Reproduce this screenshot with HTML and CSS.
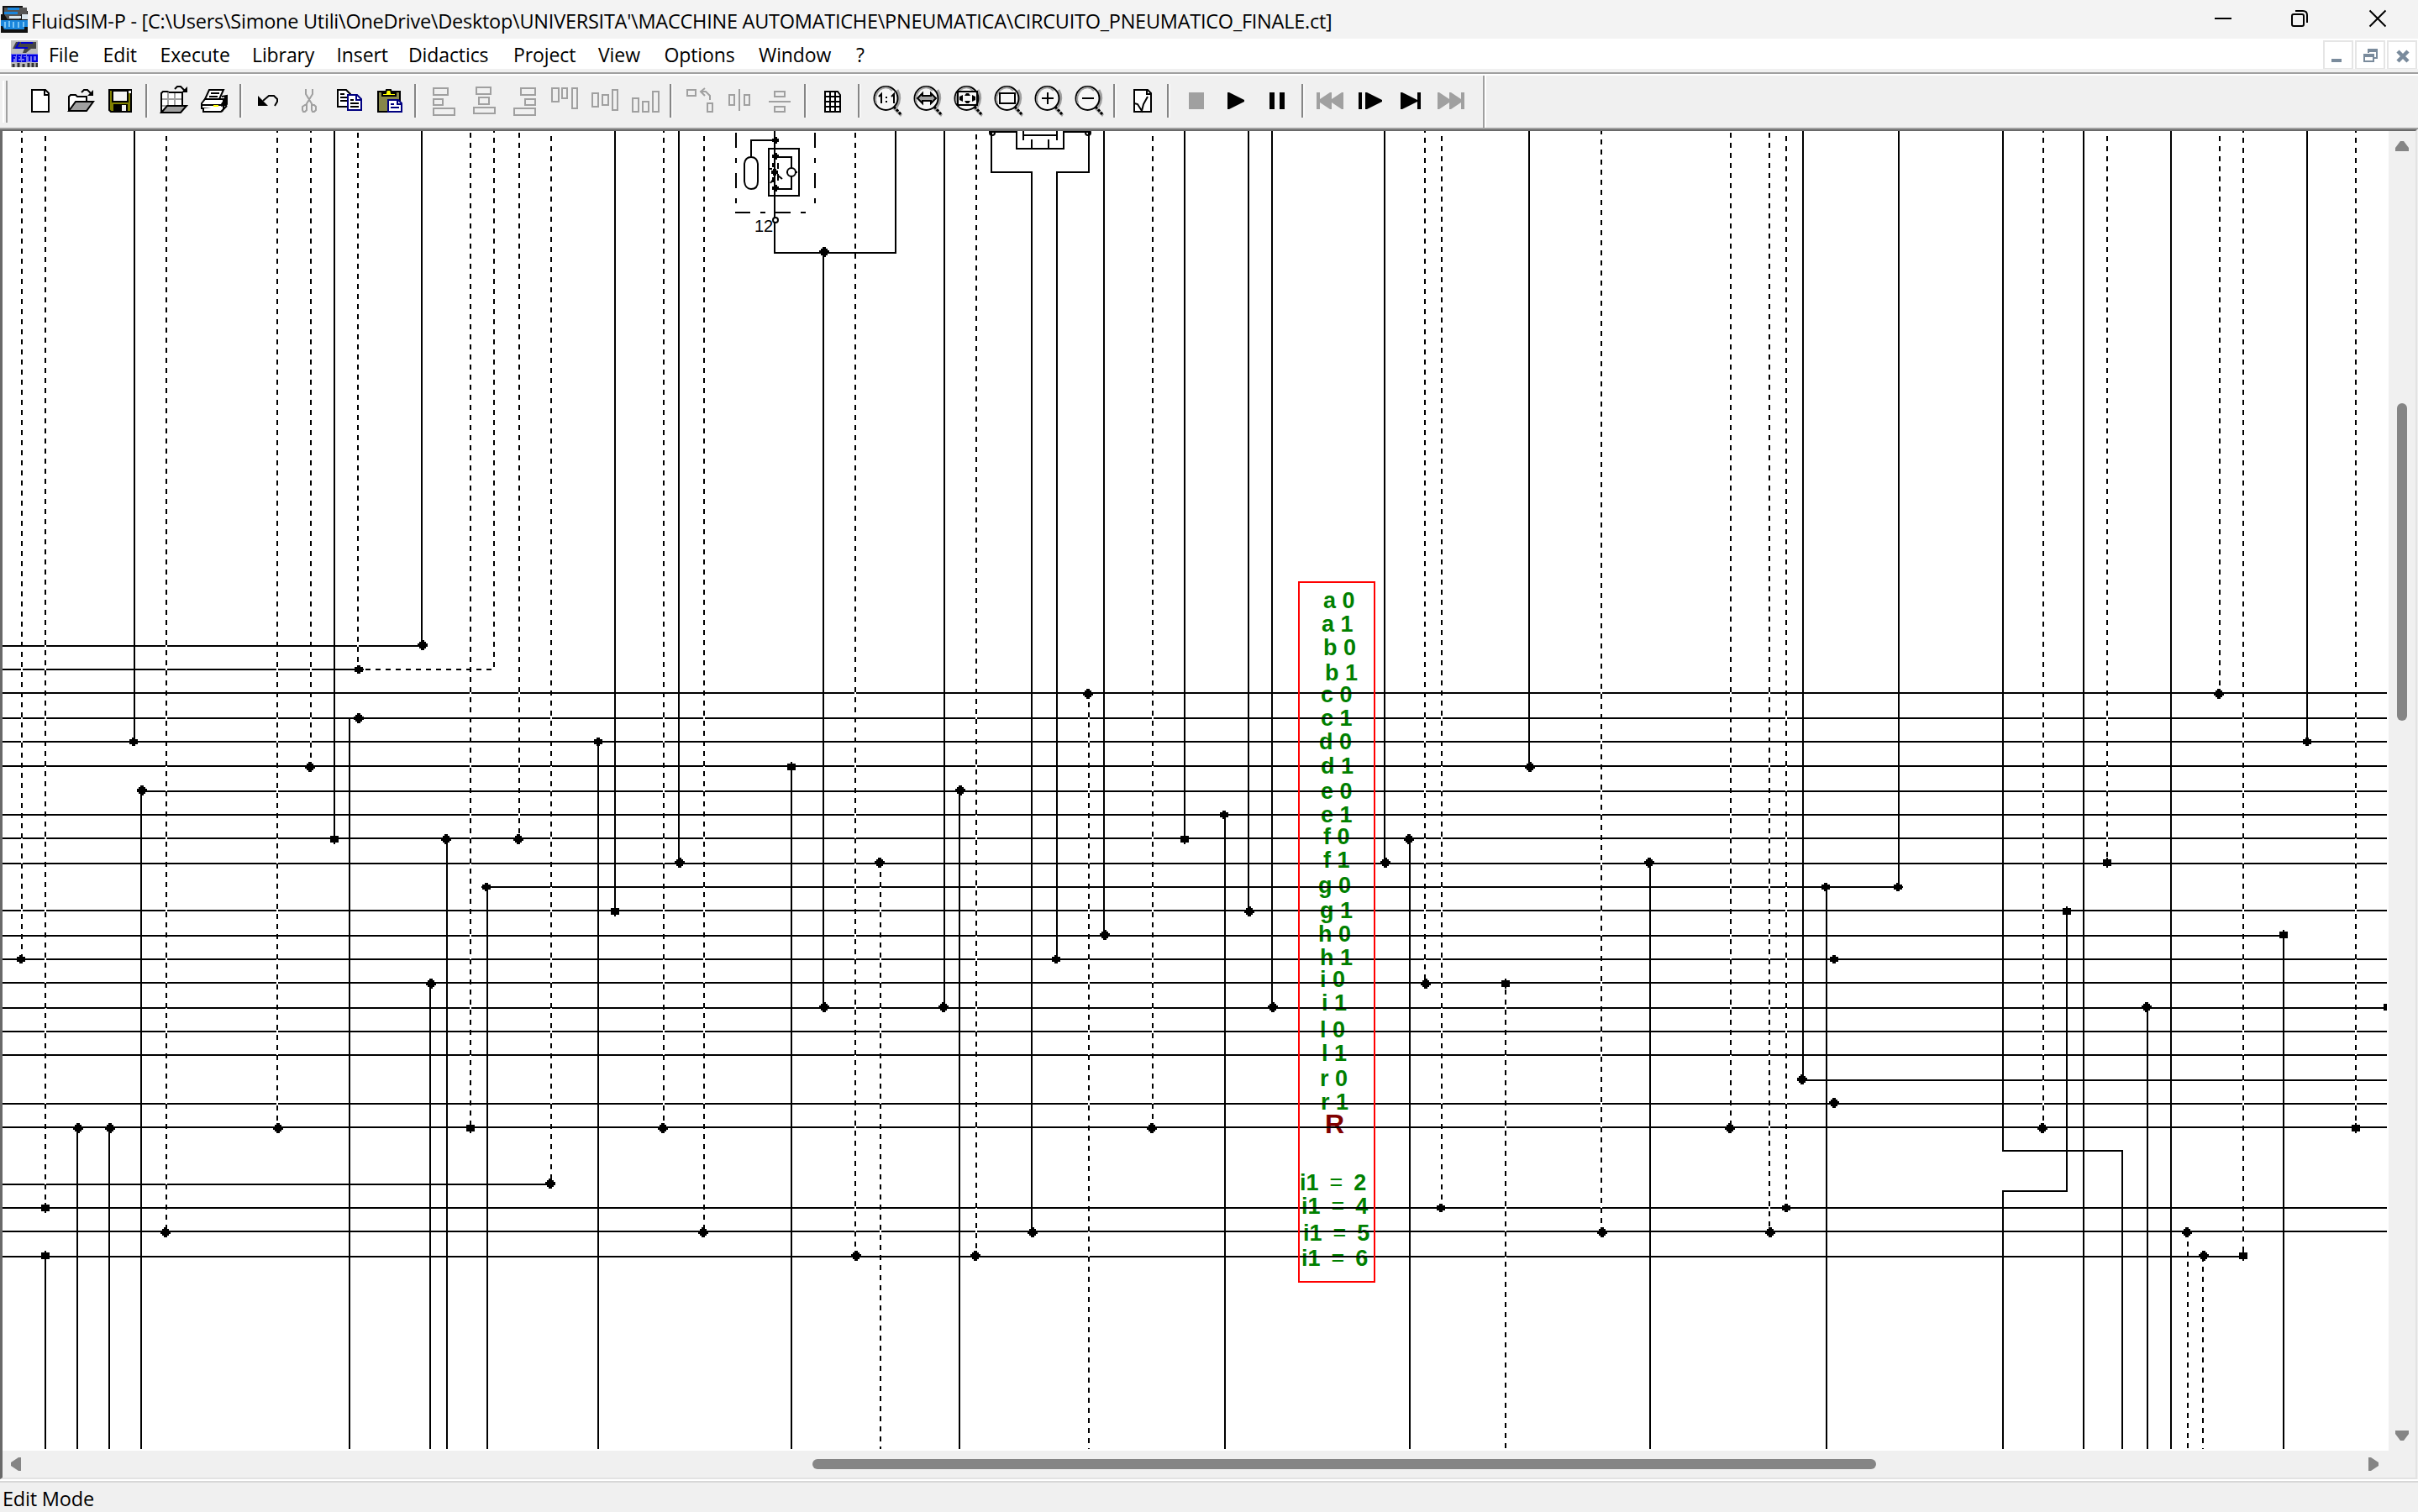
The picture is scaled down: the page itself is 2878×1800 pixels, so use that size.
FILE: index.html
```html
<!DOCTYPE html>
<html lang="en">
<head>
<meta charset="utf-8">
<title>FluidSIM-P</title>
<link rel="stylesheet" href="styles.css">
</head>
<body>
<div class="window">
  <header class="titlebar">
    <svg class="app-icon" viewBox="0 0 32 32"><path fill="#111" d="M2 0H26V6H32V32H0V10H2z"/><path fill="#555" d="M4 2H31V10H24L22 16H8L4 10z"/><path fill="#1b86dc" d="M8 2H22V5H8zM4 7H20V10H4zM0 17H32V25H28V28H4L2 24H0z"/><path fill="#d9e6ee" d="M10 12H24V15H10zM25 10H32V16H25z"/><path d="M5 19V26M10 18V25M15 19V26M21 19V26M27 19V25" stroke="#7cc5f5" stroke-width="2"/></svg>
    <span class="title">FluidSIM-P - [C:\Users\Simone Utili\OneDrive\Desktop\UNIVERSITA'\MACCHINE AUTOMATICHE\PNEUMATICA\CIRCUITO_PNEUMATICO_FINALE.ct]</span>
    <svg class="caption-buttons" viewBox="2598 0 280 46" fill="none" stroke="#000" stroke-width="2"><path d="M2636 22H2656"/><rect x="2728" y="17" width="14" height="14" rx="2"/><path d="M2732 13H2741Q2746 13 2746 18V27"/><path d="M2820.500 12.500L2839.500 31.500M2839.500 12.500L2820.500 31.500"/></svg>
  </header>
  <nav class="menubar">
    <svg class="doc-icon" viewBox="0 0 32 32"><path fill="#bdbdbd" d="M0 0H32V32H0z"/><path fill="#444" d="M6 2H30V10H24L18 15H14L16 10H2z"/><path d="M10 2L6 9H20M12 3H26" fill="none" stroke="#00c" stroke-width="2"/><path fill="#7474f0" d="M0 16H32V26H0z"/><path d="M2 26V18H6M2 21H5M12 18H8V25H12M8 21H11M18 18H14V21H17V25H13M19 18H25M22 18V25M26 18H31V25H26z" fill="none" stroke="#0000e0" stroke-width="2"/><path d="M3 32V28M9 27V32M15 28V32M21 27V32M26 27V32M31 27V32" stroke="#333" stroke-width="3"/></svg>
    <span class="m file">File</span><span class="m edit">Edit</span><span class="m execute">Execute</span><span class="m library">Library</span><span class="m insert">Insert</span><span class="m didactics">Didactics</span><span class="m project">Project</span><span class="m view">View</span><span class="m options">Options</span><span class="m win">Window</span><span class="m">?</span>
    <div class="mdi">
      <span class="mdi-button"><svg viewBox="0 0 32 32"><path fill="#7a8b9c" d="M8 20H20V24H8z"/></svg></span>
      <span class="mdi-button"><svg viewBox="0 0 32 32"><path d="M9 17H20V23H9zM14 13V11H24V19H21" fill="none" stroke="#7a8b9c" stroke-width="2"/><path fill="#7a8b9c" d="M8 14H21V18H8zM13 8H25V12H13z"/></svg></span>
      <span class="mdi-button"><svg viewBox="0 0 32 32"><path d="M11 11L23 23M23 11L11 23" stroke="#7a8b9c" stroke-width="4.500"/></svg></span>
    </div>
  </nav>
  <div class="toolbar">
    <span class="grip"></span>
    <svg class="tb" viewBox="0 0 48 62"><path d="M14 17H30L34 21V43H14z" fill="#fff" stroke="#000" stroke-width="2"/><path d="M29 17V23H34" fill="none" stroke="#000" stroke-width="2"/></svg>
    <svg class="tb" viewBox="0 0 48 62" stroke="#000" stroke-width="2"><path d="M10 42V25L12 23H18L20 25H31V31" fill="#fff"/><path d="M10 42L18 31H39L31 42z" fill="#a0a0a0"/><path d="M25 20L28 17H32L37 22" fill="none"/><path d="M39 17V24H32z" fill="#000" stroke="none"/></svg>
    <svg class="tb" viewBox="0 0 48 62"><path d="M10 17H36V43H12L10 41z" fill="#808000" stroke="#000" stroke-width="2"/><path d="M14 18H32V31H14z" fill="#f4f4f4" stroke="#000" stroke-width="2"/><path d="M15 34H32V43H15z"/><path fill="#f0f0f0" d="M25 35H30V42H25zM33 18H36V21H33z"/></svg>
    <i class="sep"></i>
    <svg class="tb" viewBox="0 0 48 62" stroke="#000" stroke-width="2"><path d="M8 43V21L10 19H15L17 20H33V36L28 44z" fill="#fff"/><path d="M9 28H32M9 36H20M16 20V44M24 21V35" stroke="#a0a0a0"/><path d="M8 44L15 36H38L31 44z" fill="#a0a0a0"/><path d="M24 16L27 13H31L36 18" fill="none"/><path d="M39 13V20H32z" fill="#000" stroke="none"/></svg>
    <svg class="tb" viewBox="0 0 48 62" stroke="#000" stroke-width="2" fill="#fff"><path d="M32 25L38 24V34L32 43"/><path d="M8 33L12 28H36L32 34V39H8z"/><path d="M17 17H34L29 28H12z"/><path d="M19 21H29M17 25H27M8 35H32M10 39V43H31L38 36M34 27V40M36 25V36"/><path d="M22 36H28" stroke="#ff0"/></svg>
    <i class="sep"></i>
    <svg class="tb" viewBox="0 0 48 62"><path d="M11 24V36H23z"/><path d="M17 30L24 24H30L34 28V31L31 36" fill="none" stroke="#000" stroke-width="2"/></svg>
    <svg class="tb off" viewBox="0 0 48 62"><path d="M20 16V22L28 35M28 16V22L20 35M16 37L19 35H21V41L19 43H17L16 41zM27 35H30L32 37V41L30 43H28L27 41z"/></svg>
    <svg class="tb" viewBox="0 0 48 62" fill="#fff" stroke="#000" stroke-width="2"><path d="M10 17H20L25 22V37H10z"/><path d="M13 22H18M13 26H21M13 30H21" fill="none"/><g stroke="#000080"><path d="M22 23H33L38 28V41H22z"/><path d="M32 23V29H38" fill="none"/></g><path d="M25 29H29M25 33H35M25 37H35" fill="none"/></svg>
    <svg class="tb" viewBox="0 0 48 62" stroke="#000" stroke-width="2"><path d="M10 19H36V43H10z" fill="#87874a"/><path d="M15 24V21H19L20 17H25L26 21H31V24z" fill="#ff0"/><g fill="#fff" stroke="#000080"><path d="M22 29H34L38 33V43H22z"/><path d="M33 29V34H38M25 34H29M25 38H35" fill="none"/></g></svg>
    <i class="sep"></i>
    <svg class="tb off" viewBox="0 0 48 62"><path d="M12 15H29V23H12zM12 28H23V35H12zM12 39H37V47H12z"/></svg>
    <svg class="tb off" viewBox="0 0 48 62"><path d="M15 14H32V22H15zM18 26H30V34H18zM12 38H37V45H12z"/></svg>
    <svg class="tb off" viewBox="0 0 48 62"><path d="M20 15H37V23H20zM25 28H37V35H25zM12 39H37V47H12z"/></svg>
    <svg class="tb off" viewBox="0 0 48 62"><path d="M9 15H17V31H9zM21 15H27V27H21zM33 15H39V39H33z"/></svg>
    <svg class="tb off" viewBox="0 0 48 62"><path d="M9 21H16V37H9zM21 23H28V35H21zM33 17H39V41H33z"/></svg>
    <svg class="tb off" viewBox="0 0 48 62"><path d="M9 27H16V43H9zM21 31H28V43H21zM33 19H40V43H33z"/></svg>
    <i class="sep"></i>
    <svg class="tb off" viewBox="0 0 48 62"><path d="M10 17H20V24H10zM34 33H40V43H34zM31 15L26 19L31 24M26 19H32L37 24V29"/></svg>
    <svg class="tb off" viewBox="0 0 48 62"><path d="M12 23H18V35H12zM24 16V42M30 23H36V35H30z"/></svg>
    <svg class="tb off" viewBox="0 0 48 62"><path d="M18 19H30V25H18zM11 31H37M18 37H30V43H18z"/></svg>
    <i class="sep"></i>
    <svg class="tb" viewBox="0 0 48 62" stroke="#000" stroke-width="2"><path d="M14 19H29L32 23V43H14z" fill="#fff"/><path d="M20 19V43M26 19V43M14 25H32M14 31H32M14 37H32" fill="none"/></svg>
    <i class="sep"></i>
    <svg class="tb" viewBox="0 0 48 62"><use href="#lens"/><path d="M14 25L17 22V33M29 25L32 22V33" fill="none" stroke="#000" stroke-width="2"/><path d="M22 25H24V27H22zM22 30H24V32H22z"/></svg>
    <svg class="tb" viewBox="0 0 48 62"><use href="#lens"/><path d="M12 27L18 21V24H28V21L34 27L28 33V30H18V33z" fill="#a0a0a0" stroke="#000" stroke-width="2"/></svg>
    <svg class="tb" viewBox="0 0 48 62"><use href="#lens"/><path d="M12 19H35V35H12z" fill="none" stroke="#000" stroke-width="2"/><path d="M22 21H25L27 24H20zM22 33H25L27 30H20zM14 25V29L18 31V23zM33 25V29L29 31V23z"/></svg>
    <svg class="tb" viewBox="0 0 48 62"><use href="#lens"/><path d="M14 21H32V33H14z" fill="none" stroke="#000" stroke-width="2"/></svg>
    <svg class="tb" viewBox="0 0 48 62"><use href="#lens"/><path d="M16 27H30M23 20V34" stroke="#000" stroke-width="2"/></svg>
    <svg class="tb" viewBox="0 0 48 62"><use href="#lens"/><path d="M16 27H30" stroke="#000" stroke-width="2"/></svg>
    <i class="sep"></i>
    <svg class="tb" viewBox="0 0 48 62" fill="none" stroke="#000" stroke-width="2"><path d="M14 17H30L34 21V43H14z" fill="#fff"/><path d="M29 17V22H34M14 33L18 34L23 42L25 34L30 25"/></svg>
    <i class="sep"></i>
    <svg class="tb" viewBox="0 0 48 62"><path fill="#a0a0a0" d="M15 20H33V40H15z"/></svg>
    <svg class="tb" viewBox="0 0 48 62"><path d="M13 20H15L33 29V31L15 40H13z"/></svg>
    <svg class="tb" viewBox="0 0 48 62"><path d="M15 20H21V40H15zM27 20H33V40H27z"/></svg>
    <i class="sep"></i>
    <svg class="tb" viewBox="0 0 48 62"><path fill="#a0a0a0" d="M7 20H11V28L23 20H25V28L37 20H39V40H37L25 32V40H23L11 32V40H7z"/></svg>
    <svg class="tb" viewBox="0 0 48 62"><path d="M9 20H13V40H9zM17 20H19L37 29V31L19 40H17z"/></svg>
    <svg class="tb" viewBox="0 0 48 62"><path d="M11 20H13L31 29V20H35V40H31V31L13 40H11z"/></svg>
    <svg class="tb" viewBox="0 0 48 62"><path fill="#a0a0a0" d="M39 20H35V28L23 20H21V28L9 20H7V40H9L21 32V40H23L35 32V40H39z"/></svg>
    <i class="toolbar-end"></i>
  </div>
  <main class="workspace">
    <svg class="circuit" viewBox="3 156 2840 1571">
      <defs>
        <g id="lens"><path d="M32 36L42 46L40 49L30 39z" fill="#a0a0a0"/><path d="M32 37L41 47" stroke="#000" stroke-width="3" stroke-dasharray="3 1.500"/><path d="M36 17Q42 27 35 38" fill="none" stroke="#a0a0a0" stroke-width="3"/><circle cx="22.500" cy="27" r="14" fill="#f6f6f6" stroke="#000" stroke-width="2"/><path d="M11 33Q8 24 15 17Q23 11 30 18" fill="none" stroke="#a0a0a0" stroke-width="2"/></g>
        <path id="n" d="M-2-6H2V-4H4V-2H6V2H4V4H2V6H-2V4H-4V2H-6V-2H-4V-4H-2z"/>
        <path id="f" d="M-2-5H2V-3H5V-1H6V1H5V3H2V5H-2V3H-5V1H-6V-1H-5V-3H-2z"/>
        <path id="s" d="M-1-6H1V-4H5V4H1V6H-1V4H-5V-4H-1z"/>
        <path id="t" d="M-2-4H2V-2H4V2H2V4H-2V2H-4V-2H-2z"/>
      </defs>
      <g class="labels">
        <text x="1575" y="724">a 0</text><text x="1573" y="752">a 1</text><text x="1575" y="780">b 0</text><text x="1577" y="810">b 1</text>
        <text x="1572" y="836">c 0</text><text x="1572" y="864">c 1</text><text x="1570" y="892">d 0</text><text x="1572" y="921">d 1</text>
        <text x="1572" y="951">e 0</text><text x="1572" y="979">e 1</text><text x="1575" y="1005">f 0</text><text x="1575" y="1033">f 1</text>
        <text x="1569" y="1063">g 0</text><text x="1571" y="1093">g 1</text><text x="1569" y="1121">h 0</text><text x="1571" y="1149">h 1</text>
        <text x="1571" y="1175">i 0</text><text x="1573" y="1203">i 1</text><text x="1571" y="1235">l 0</text><text x="1573" y="1263">l 1</text>
        <text x="1571" y="1293">r 0</text><text x="1572" y="1321">r 1</text>
        <text class="reset" x="1577" y="1349">R</text>
        <g class="steps"><text x="1547" y="1417">i1 <tspan class="eq">=</tspan> 2</text><text x="1549" y="1445">i1 <tspan class="eq">=</tspan> 4</text><text x="1551" y="1477">i1 <tspan class="eq">=</tspan> 5</text><text x="1549" y="1507">i1 <tspan class="eq">=</tspan> 6</text></g>
      </g>
      <g class="wires">
        <path d="M3 769H503M3 797H427M3 825H2841M3 855H2841M3 883H2841M3 912H2841M168 942H2841M3 970H2841M3 998H2841M3 1028H2841M580 1056H2260M3 1084H2841M3 1114H2718M3 1142H2841M3 1170H2841M3 1200H2841M3 1228H2841M3 1256H2841M2146 1286H2841M3 1314H2841M3 1342H2841M3 1410H656M3 1438H2841M3 1466H2841M3 1496H2670"/>
        <path class="gap" d="M26 156V1142M54 156V1438M198 156V1466M330 156V1342M370 156V912M426 156V797M560 156V1342M588 156V797M618 156V998M656 156V1410M790 156V1342M838 156V1466M1018 156V1496M1048 1028V1725M1162 156V1496M1296 825V1725M1372 156V1342M1696 156V1170M1716 156V1438M1792 1170V1725M1906 156V1466M2060 156V1342M2106 156V1466M2126 156V1438M2432 156V1342M2508 156V1028M2642 156V825M2670 156V1496M2804 156V1342"/>
        <path class="pilot" d="M26 152V1142M54 150V1438M198 150V1466M330 152V1342M370 152V912M426 146V797H588M560 146V1342M588 152V797M618 146V998M656 150V1410M790 152V1342M838 150V1466M1018 146V1496M1048 1026V1725M1162 148V1496M1296 824V1725M1372 150V1342M1696 152V1170M1716 150V1438M1792 1166V1725M1906 154V1466M2060 146V1342M2106 146V1466M2126 150V1438M2432 152V1342M2508 150V1028M2642 150V825M2670 152V1496M2804 152V1342M2604 1466V1725M2622 1496V1725"/>
        <path d="M54 1495V1725M92 1342V1725M130 1342V1725M160 156V883M168 942V1725M398 156V998M416 855V1725M502 156V769M512 1170V1725M532 998V1725M580 1056V1725M712 883V1725M732 156V1084M808 156V1028M942 912V1725M980 301V1200M1124 156V1200M1142 942V1725M1228 204V1466M1258 204V1142M1314 156V1114M1410 156V998M1458 970V1725M1486 156V1084M1514 156V1200M1648 156V1028M1678 998V1725M1820 156V912M1964 1028V1725M2146 156V1286M2174 1056V1725M2260 156V1056M2384 156V1370H2526V1725M2460 1084V1418H2384V1725M2480 156V1725M2556 1200V1725M2584 156V1725M2718 1114V1725M2746 156V883"/>
        <path d="M922 156V301H1066V156M894 187V167H922M915 177H951V233H915zM922 187H942V200M942 210V225H922M1180 158V205H1228V214M1296 156V205H1258V214M1177 157H1210V177H1266V157H1298M1218 156V167M1258 156V167M1218 161H1258M1228 166V177M1248 166V177"/>
        <path d="M876 158V176M876 188V194M876 206V224M876 236V242M970 158V176M970 188V194M970 206V224M970 236V242M875 253H893M905 253H911M923 253H941M953 253H959"/>
        <path class="smooth" d="M886 195V216Q887 225 894 225Q902 225 902 216V195Q901 187 894 187Q887 187 886 195zM926 194V201M920 194V199M920 211V217M926 207V215M917 218L920 214M926 209L931 213M915 201H919M936 205H938M946 205H949"/>
        <circle class="smooth white" cx="942" cy="205" r="5"/><circle class="smooth white" cx="923" cy="262" r="3"/><circle class="smooth" cx="1181" cy="158" r="3"/><circle class="smooth" cx="1295" cy="158" r="3"/>
      </g>
      <rect class="frame" x="1546" y="693" width="90" height="833"/>
      <text class="port" x="898" y="276">12</text>
      <g class="nodes">
        <use href="#t" x="923" y="167"/><use href="#t" x="923" y="186"/><use href="#t" x="922" y="205"/><use href="#t" x="923" y="224"/>
        <use href="#n" x="981" y="300"/><use href="#n" x="503" y="768"/><use href="#f" x="427" y="797"/><use href="#f" x="159" y="883"/><use href="#n" x="427" y="855"/><use href="#f" x="712" y="883"/><use href="#n" x="369" y="913"/><use href="#n" x="169" y="941"/><use href="#s" x="398" y="999"/><use href="#n" x="531" y="999"/><use href="#n" x="617" y="999"/><use href="#f" x="579" y="1056"/><use href="#f" x="25" y="1142"/><use href="#n" x="513" y="1171"/><use href="#n" x="93" y="1343"/><use href="#n" x="131" y="1343"/><use href="#n" x="331" y="1343"/><use href="#s" x="560" y="1343"/><use href="#n" x="655" y="1409"/><use href="#s" x="54" y="1438"/><use href="#n" x="197" y="1467"/><use href="#s" x="54" y="1495"/>
        <use href="#s" x="732" y="1085"/><use href="#n" x="809" y="1027"/><use href="#s" x="942" y="913"/><use href="#n" x="1047" y="1027"/><use href="#n" x="1143" y="941"/><use href="#n" x="981" y="1199"/><use href="#n" x="1123" y="1199"/><use href="#n" x="1295" y="826"/><use href="#f" x="1257" y="1142"/><use href="#n" x="1315" y="1113"/><use href="#s" x="1410" y="999"/><use href="#n" x="789" y="1343"/><use href="#n" x="1371" y="1343"/><use href="#n" x="837" y="1467"/><use href="#n" x="1019" y="1495"/><use href="#n" x="1161" y="1495"/><use href="#n" x="1229" y="1467"/>
        <use href="#f" x="1457" y="970"/><use href="#n" x="1487" y="1085"/><use href="#n" x="1515" y="1199"/><use href="#n" x="1649" y="1027"/><use href="#n" x="1677" y="999"/><use href="#n" x="1821" y="913"/><use href="#n" x="1697" y="1171"/><use href="#s" x="1792" y="1171"/><use href="#n" x="1963" y="1027"/><use href="#n" x="2145" y="1285"/><use href="#n" x="2059" y="1343"/><use href="#f" x="1715" y="1438"/><use href="#f" x="2126" y="1438"/><use href="#n" x="1907" y="1467"/><use href="#n" x="2107" y="1467"/>
        <use href="#n" x="2641" y="826"/><use href="#f" x="2746" y="883"/><use href="#s" x="2508" y="1027"/><use href="#f" x="2173" y="1056"/><use href="#f" x="2259" y="1056"/><use href="#s" x="2460" y="1085"/><use href="#s" x="2718" y="1113"/><use href="#f" x="2183" y="1142"/><use href="#n" x="2555" y="1199"/><path d="M2837 1195H2841V1203H2837z"/><use href="#n" x="2183" y="1313"/><use href="#n" x="2431" y="1343"/><use href="#s" x="2804" y="1343"/><use href="#n" x="2603" y="1467"/><use href="#n" x="2623" y="1495"/><use href="#s" x="2670" y="1495"/>
      </g>
    </svg>
    <div class="vscroll"><svg class="arrow-v" viewBox="0 0 16 12"><path d="M0 12V8L6 0H10L16 8V12z"/></svg><i class="thumb-v"></i><svg class="arrow-v" viewBox="0 0 16 12"><path d="M0 0V4L6 12H10L16 4V0z"/></svg></div>
    <div class="hscroll"><svg class="arrow-h" viewBox="0 0 12 16"><path d="M12 0H9L0 6V10L9 16H12z"/></svg><i class="thumb-h"></i><svg class="arrow-h" viewBox="0 0 12 16"><path d="M0 0H3L12 6V10L3 16H0z"/></svg></div>
  </main>
  <footer class="status">Edit Mode</footer>
</div>
</body>
</html>
```
FILE: styles.css
```css
* { box-sizing: border-box; }
body { margin: 0; background: #f0f0f0; color: #000; font: 24px/1 "Open Sans", "Noto Sans", sans-serif; }
.window { width: 2878px; height: 1800px; display: flex; flex-direction: column; overflow: hidden; }
svg { display: block; flex: none; }

.titlebar { height: 46px; flex: none; display: flex; align-items: center; background: #f3f3f3; }
.app-icon { width: 32px; height: 32px; margin-left: 1px; }
.title { margin-left: 4px; white-space: nowrap; font-size: 23.5px; letter-spacing: -0.25px; line-height: 46px; padding-top: 3px; }
.caption-buttons { width: 280px; height: 46px; margin-left: auto; }

.menubar { height: 36px; flex: none; display: flex; background: #fff; padding-left: 13px; }
.doc-icon { width: 32px; height: 32px; margin: 2px 13px 0 0; }
.m { line-height: 38px; font-size: 23px; letter-spacing: -0.1px; white-space: nowrap; }
.file { width: 64.5px; }
.edit { width: 68px; }
.execute { width: 109.5px; }
.library { width: 100.5px; }
.insert { width: 85.5px; }
.didactics { width: 125px; }
.project { width: 101px; }
.view { width: 78.5px; }
.options { width: 112.5px; }
.win { width: 116px; }
.mdi { display: flex; gap: 2px; margin: 2px 1px 0 auto; }
.mdi-button { width: 36px; height: 35px; border: 2px solid #e5e5e5; background: #fff; }
.mdi-button svg { width: 32px; height: 32px; }

.toolbar { height: 72px; flex: none; display: flex; border-top: 4px solid #f0f0f0; position: relative; box-shadow: inset 0 2px #a0a0a0, inset 0 4px #fff; padding-top: 4px; border-bottom: 2px solid #a0a0a0; }
.grip { width: 6px; height: 50px; margin: 6px 15px 0 3px; border-left: 2px solid #fff; border-right: 2px solid #a0a0a0; }
.tb { width: 48px; height: 62px; }
.off { fill: none; stroke: #a0a0a0; stroke-width: 2; }
.sep { width: 4px; height: 40px; margin: 10px 7px 0 5px; flex: none; background: linear-gradient(90deg, #858585 50%, #f8f8f8 50%); }
.toolbar-end { width: 4px; height: 62px; margin-left: 13px; background: linear-gradient(90deg, #a0a0a0 50%, #fff 50%); }

.workspace { height: 1607px; flex: none; display: grid; grid-template: 1571px 32px / 2840px 32px; border: 2px solid #696969; border-width: 2px 2px 2px 3px; border-right-color: #e3e3e3; border-bottom-color: #e3e3e3; background: #f0f0f0; width: 2877px; }
.circuit { width: 2840px; height: 1571px; background: #fff; }
.wires, .frame { fill: none; stroke: #000; stroke-width: 2; shape-rendering: crispEdges; }
.wires .gap { stroke: #fff; }
.wires .pilot { stroke-dasharray: 6 6; }
.smooth { shape-rendering: auto; }
.white { fill: #fff; }
.frame { stroke: #f00; }
.nodes { shape-rendering: crispEdges; }
.labels { font: bold 27px "Liberation Sans", Arial, sans-serif; fill: #008000; white-space: pre; }
.labels .reset { font-size: 32px; fill: #800000; }
.steps { word-spacing: 5.5px; }
.eq { font-weight: normal; }
.port { font: 20px "Liberation Sans", Arial, sans-serif; }
.vscroll { display: flex; flex-direction: column; align-items: center; padding: 12px 0; fill: #858585; }
.arrow-v { width: 16px; height: 12px; }
.thumb-v { width: 12px; height: 378px; margin: 300px 0 auto; border-radius: 6px; background: #858585; }
.hscroll { display: flex; align-items: center; padding: 0 12px 0 10px; fill: #858585; }
.arrow-h { width: 12px; height: 16px; }
.thumb-h { width: 1266px; height: 12px; margin: 0 auto 0 942px; border-radius: 6px; background: #858585; }

.status { flex: 1; border-top: 2px solid #fff; box-shadow: inset 0 2px #d7d7d7; padding-left: 3px; font-size: 23.5px; line-height: 42px; letter-spacing: -0.2px; }
```
